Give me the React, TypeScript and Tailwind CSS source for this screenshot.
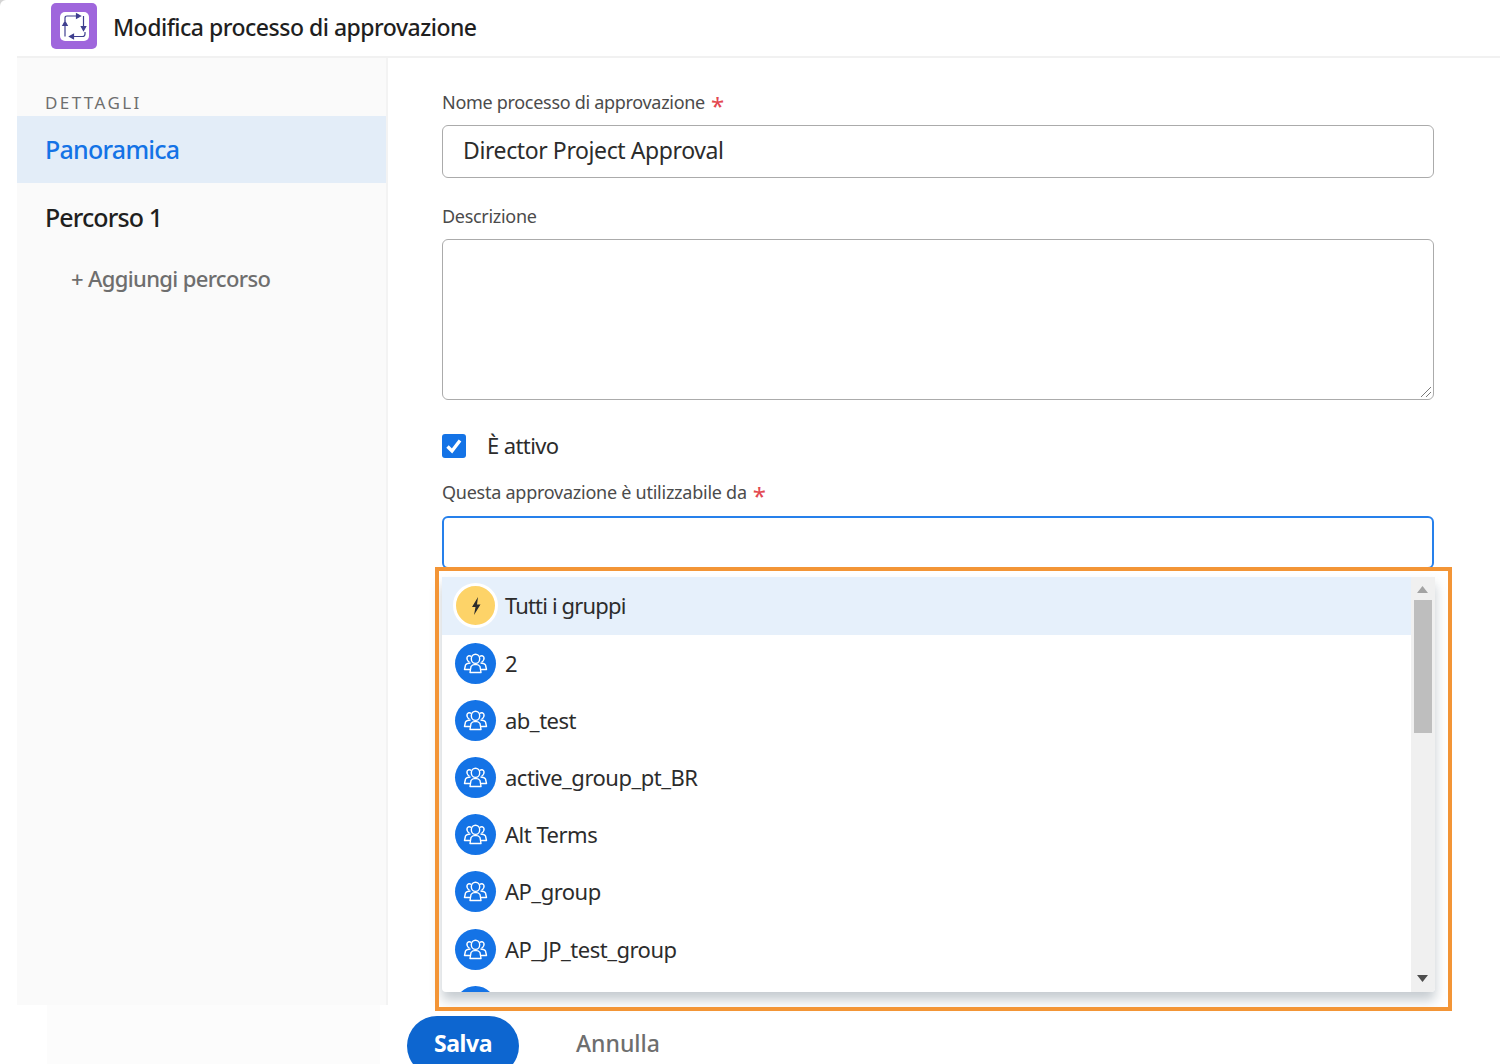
const groups = ["2", "ab_test", "active_group_pt_BR", "Alt Terms", "AP_group", "AP_JP_test_group"];

const GroupIcon = () => (
  <span className="flex h-[41px] w-[41px] shrink-0 items-center justify-center rounded-full bg-[#1473e6]">
    <svg width="25" height="25" viewBox="0 0 25 25" fill="none" stroke="#fff" strokeWidth="1.4" strokeLinejoin="round">
      <ellipse cx="12.5" cy="7.8" rx="4.2" ry="4.6" />
      <path d="M8.2 5.6 Q6.8 4.2 5.2 5 Q3.4 6 4.2 8.6 Q4.8 10.4 6.4 11" />
      <path d="M16.8 5.6 Q18.2 4.2 19.8 5 Q21.6 6 20.8 8.6 Q20.2 10.4 18.6 11" />
      <path d="M7 21.5 L8 15.5 Q9 13.6 12.5 13.4 Q16 13.6 17 15.5 L18 21.5 Z" />
      <path d="M7.4 18.5 H1.5 L2.5 14 Q3.4 12.4 7.5 12" />
      <path d="M17.6 18.5 H23.5 L22.5 14 Q21.6 12.4 17.5 12" />
    </svg>
  </span>
);

const Required = () => <span className="relative top-[4px] ml-[6px] text-[24px] leading-none text-[#e34850]">*</span>;

export default function App() {
  return (
    <div className="relative h-[1064px] w-[1500px] overflow-hidden bg-white font-['Noto_Sans',sans-serif] text-[#2c2c2c]">
      {/* Angolo della finestra */}
      <div className="absolute left-0 top-0 h-[6px] w-[6px] bg-[#d4d4d4]">
        <div className="h-full w-full rounded-tl-[6px] bg-white" />
      </div>

      {/* Testata */}
      <header className="ml-[17px] flex h-[58px] items-center border-b-2 border-[#f1f1f1] pb-[4px] pl-[34px]">
        <span className="flex h-[46px] w-[46px] items-center justify-center rounded-[5px] bg-[#9f66dc]">
          <span className="flex h-[29px] w-[29px] items-center justify-center rounded-[5px] bg-white">
            <svg width="29" height="29" viewBox="0 0 29 29" fill="none" stroke="#3f3f8f" strokeWidth="1.2">
              <path d="M5 9 V6 Q5 4 7 4 H17" />
              <path d="M16.5 1.8 L20.5 4 L16.5 6.2 Z" fill="#3f3f8f" />
              <path d="M23.5 4 V15" />
              <path d="M21.3 14.5 L23.5 18.5 L25.7 14.5 Z" fill="#3f3f8f" />
              <path d="M25 20 V22 Q25 24.5 22.5 24.5 H13" />
              <path d="M13.5 22.3 L9.5 24.5 L13.5 26.7 Z" fill="#3f3f8f" />
              <path d="M5 24.5 V13" />
              <path d="M2.8 13.5 L5 9.5 L7.2 13.5 Z" fill="#3f3f8f" />
            </svg>
          </span>
        </span>
        <h1 className="ml-[16px] mt-[2px] text-[23px] font-medium leading-none tracking-[-0.5px] text-[#1f1f1f]">Modifica processo di approvazione</h1>
      </header>

      <div className="flex h-[947px]">
        {/* Barra laterale */}
        <aside className="ml-[17px] w-[371px] shrink-0 border-r-2 border-[#f3f3f3] bg-[#fafafa] pt-[33px]">
          <p className="pl-[28px] text-[17px] leading-[24px] tracking-[2.4px] text-[#6e6e6e]">DETTAGLI</p>
          <div className="mt-[1px] flex h-[67px] items-center bg-[#e3edf8] pl-[28px] pt-[1px] text-[25px] font-medium tracking-[-0.75px] text-[#1473e6]">Panoramica</div>
          <div className="flex h-[68px] items-center pl-[28px] pt-[1px] text-[25px] font-medium tracking-[-0.9px] text-[#1f1f1f]">Percorso 1</div>
          <div className="mt-[11px] pl-[54px] text-[22px] font-medium tracking-[-0.65px] text-[#6e6e6e]">+ Aggiungi percorso</div>
        </aside>

        {/* Modulo */}
        <main className="box-content w-[992px] pl-[54px] pt-[31px]">
          <label className="flex h-[26px] items-center text-[18px] tracking-[-0.3px] text-[#4b4b4b]">Nome processo di approvazione<Required /></label>
          <div className="mt-[10px] flex h-[53px] w-[992px] items-center rounded-[6px] border border-[#ababab] pb-[3px] pl-[20px] text-[23px] tracking-[-0.4px] text-[#2c2c2c]">Director Project Approval</div>
          <label className="mt-[25px] flex h-[26px] items-center text-[18px] tracking-[-0.3px] text-[#4b4b4b]">Descrizione</label>
          <div className="relative mt-[10px] h-[161px] w-[992px] rounded-[6px] border border-[#ababab]">
            <svg className="absolute bottom-[1px] right-[1px]" width="12" height="12" viewBox="0 0 12 12" stroke="#7a7a7a" strokeWidth="1">
              <path d="M1 11 L11 1 M6 11 L11 6" />
            </svg>
          </div>
          <div className="mt-[34px] flex h-[24px] items-center">
            <span className="flex h-[24px] w-[24px] items-center justify-center rounded-[3px] bg-[#1473e6]">
              <svg width="20" height="20" viewBox="0 0 20 20" fill="none" stroke="#fff" strokeWidth="3.4">
                <path d="M3.5 10.5 L8 15 L16 4.5" />
              </svg>
            </span>
            <span className="-mt-[2px] ml-[21px] text-[22px] tracking-[-0.6px] text-[#2c2c2c]">È attivo</span>
          </div>
          <label className="mt-[21px] flex h-[26px] items-center text-[18px] tracking-[-0.25px] text-[#4b4b4b]">Questa approvazione è utilizzabile da<Required /></label>
          <div className="mt-[11px] h-[53px] w-[992px] rounded-[6px] border-2 border-[#2680eb]" />
        </main>
      </div>

      {/* Piede */}
      <footer className="flex h-[59px]">
        <div className="ml-[47px] h-full w-[333px] bg-[#fcfcfc]" />
        <button className="ml-[27px] mt-[11px] h-[60px] w-[112px] rounded-[30px] bg-[#0d66d0] pb-[6px] text-[23px] font-bold tracking-[-0.4px] text-white">Salva</button>
        <button className="ml-[57px] mt-[11px] h-[60px] pb-[6px] text-[23px] font-medium text-[#6e6e6e]">Annulla</button>
      </footer>

      {/* Menu a discesa */}
      <div className="absolute left-[442px] top-[577px] h-[415px] w-[993px] overflow-hidden rounded-b-[4px] bg-white shadow-[0_8px_12px_rgba(90,105,120,0.35)]">
        <div className="flex">
          <ul className="w-[969px]">
            <li className="flex h-[57.5px] items-center bg-[#e6f0fb] pl-[11px]">
              <span className="flex h-[45px] w-[45px] items-center justify-center rounded-full border-[3px] border-white bg-[#fdd368]">
                <svg width="14" height="20" viewBox="0 0 14 20" fill="#2c2c2c">
                  <path d="M9 1 L3 11 H6.5 L5 19 L11.5 8.5 H8 Z" />
                </svg>
              </span>
              <span className="ml-[7px] text-[22px] tracking-[-0.85px] text-[#2c2c2c]">Tutti i gruppi</span>
            </li>
            {groups.map((name) => (
              <li key={name} className="flex h-[57.2px] items-center pl-[13px]">
                <GroupIcon />
                <span className="ml-[9px] text-[22px] tracking-[-0.5px] text-[#2c2c2c]">{name}</span>
              </li>
            ))}
            <li className="flex h-[57.2px] items-start pl-[13px] pt-[8px]">
              <GroupIcon />
            </li>
          </ul>
          <div className="relative h-[415px] w-[24px] bg-[#f0f0f0]">
            <svg className="absolute left-[6px] top-[9px]" width="11" height="7" viewBox="0 0 11 7" fill="#a3a3a3"><path d="M5.5 0 L11 7 H0 Z" /></svg>
            <div className="absolute left-[3px] top-[23px] h-[133px] w-[18px] bg-[#bebebe]" />
            <svg className="absolute left-[6px] top-[398px]" width="11" height="7" viewBox="0 0 11 7" fill="#4d4d4d"><path d="M5.5 7 L11 0 H0 Z" /></svg>
          </div>
        </div>
      </div>

      {/* Riquadro arancione */}
      <div className="absolute left-[435px] top-[567px] h-[444px] w-[1017px] border-4 border-[#f39536]" />
    </div>
  );
}
